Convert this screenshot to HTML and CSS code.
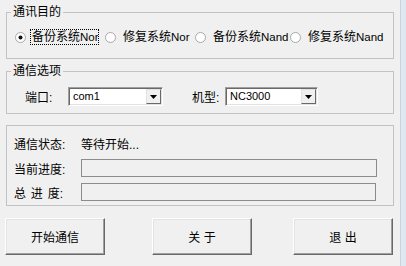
FILE: index.html
```html
<!DOCTYPE html>
<html lang="zh-CN">
<head>
<meta charset="utf-8">
<title>通讯</title>
<link rel="stylesheet" href="styles.css">
</head>
<body>
<div class="window">
  <div class="panel">
    <fieldset class="group g-target">
      <legend>通讯目的</legend>
      <div class="radios">
        <label class="radio r1">
          <svg class="rb" width="11" height="11" viewBox="0 0 11 11"><circle cx="5.5" cy="5.5" r="5" fill="#fff" stroke="#a8a8a8"/><circle cx="5.5" cy="5.5" r="2" fill="#111"/></svg>
          <span class="rtext focus">备份系统<span class="lat">Nor</span></span>
        </label>
        <label class="radio r2">
          <svg class="rb" width="11" height="11" viewBox="0 0 11 11"><circle cx="5.5" cy="5.5" r="5" fill="#fff" stroke="#a8a8a8"/></svg>
          <span class="rtext">修复系统<span class="lat">Nor</span></span>
        </label>
        <label class="radio r3">
          <svg class="rb" width="11" height="11" viewBox="0 0 11 11"><circle cx="5.5" cy="5.5" r="5" fill="#fff" stroke="#a8a8a8"/></svg>
          <span class="rtext">备份系统<span class="lat">Nand</span></span>
        </label>
        <label class="radio r4">
          <svg class="rb" width="11" height="11" viewBox="0 0 11 11"><circle cx="5.5" cy="5.5" r="5" fill="#fff" stroke="#a8a8a8"/></svg>
          <span class="rtext">修复系统<span class="lat">Nand</span></span>
        </label>
      </div>
    </fieldset>

    <fieldset class="group g-opts">
      <legend>通信选项</legend>
      <div class="opts">
        <span class="lbl lbl-port">端口:</span>
        <div class="combo combo-port">
          <span class="val">com1</span>
          <span class="arrow"><svg width="7" height="4" viewBox="0 0 7 4"><path d="M0 0H7L3.5 4Z" fill="#000"/></svg></span>
        </div>
        <span class="lbl lbl-model">机型:</span>
        <div class="combo combo-model">
          <span class="val">NC3000</span>
          <span class="arrow"><svg width="7" height="4" viewBox="0 0 7 4"><path d="M0 0H7L3.5 4Z" fill="#000"/></svg></span>
        </div>
      </div>
    </fieldset>

    <div class="group g-status">
      <div class="srow srow-text">
        <span class="slbl">通信状态:</span>
        <span class="sval">等待开始...</span>
      </div>
      <div class="srow">
        <span class="slbl">当前进度:</span>
        <div class="bar"></div>
      </div>
      <div class="srow srow-last">
        <span class="slbl spaced">总 进 度:</span>
        <div class="bar bar-total"></div>
      </div>
    </div>

    <div class="buttons">
      <button class="btn btn-start">开始通信</button>
      <button class="btn btn-about">关 于</button>
      <button class="btn btn-exit">退 出</button>
    </div>
  </div>
  <div class="frame"></div>
</div>
</body>
</html>
```
FILE: styles.css
```css
html, body {
  margin: 0;
  padding: 0;
  background: #f0f0f0;
}
body {
  font-family: "Liberation Sans", "Noto Sans CJK SC", sans-serif;
  font-size: 12px;
  color: #000;
  width: 406px;
  height: 266px;
  overflow: hidden;
}
.window {
  display: flex;
  width: 406px;
  height: 266px;
}
.panel {
  width: 400px;
  display: flex;
  flex-direction: column;
  padding-left: 6px;
  box-sizing: border-box;
}
.frame {
  width: 6px;
  background: #dfe8f1;
  border-left: 1px solid #c9d3dd;
  box-sizing: border-box;
}

.group {
  width: 388px;
  box-sizing: border-box;
  border: 1px solid #c3c3c3;
  margin: 0;
  padding: 0;
  min-width: 0;
}
.group legend {
  margin-left: 4px;
  padding: 0 2px;
  line-height: 16px;
  height: 16px;
}

.g-target {
  margin-top: 4px;
}
.radios {
  display: flex;
  align-items: center;
  height: 16px;
  padding: 9px 0 13px 8px;
}
.radio {
  display: flex;
  align-items: center;
  white-space: nowrap;
  overflow: hidden;
  height: 16px;
}
.r1 { width: 90px; }
.r2 { width: 90px; }
.r3 { width: 95px; }
.r4 { flex: 1; }
.rb {
  flex: none;
  margin-right: 4px;
}
.rtext {
  border: 1px solid transparent;
  line-height: 14px;
  height: 14px;
  padding: 0 0 0 1px;
  overflow: hidden;
}
.lat {
  font-size: 11.5px;
}
.r2 .rtext, .r3 .rtext, .r4 .rtext {
  margin-left: 1px;
}
.focus {
  border: 1px dotted #000;
  width: 66px;
}

.g-opts {
  margin-top: 4px;
}
.opts {
  display: flex;
  align-items: center;
  height: 19px;
  padding: 8px 0 7px 18px;
}
.lbl {
  white-space: nowrap;
}
.lbl-port { width: 43px; }
.lbl-model { width: 33px; margin-left: 29px; }
.combo {
  display: flex;
  align-items: stretch;
  height: 19px;
  box-sizing: border-box;
  background: #fff;
  border: 1px solid;
  border-color: #a0a0a0 #fff #fff #a0a0a0;
  box-shadow: inset 1px 1px 0 #696969, inset -1px -1px 0 #e3e3e3;
  padding: 1px;
}
.combo-port { width: 95px; }
.combo-model { width: 93px; }
.val {
  flex: 1;
  padding-left: 3px;
  line-height: 15px;
  font-size: 11px;
}
.arrow {
  width: 15px;
  box-sizing: border-box;
  background: #f0f0f0;
  border: 1px solid;
  border-color: #e3e3e3 #696969 #696969 #e3e3e3;
  display: flex;
  align-items: center;
  justify-content: center;
}

.g-status {
  margin-top: 11px;
  padding: 9px 16px 4px 7px;
  display: flex;
  flex-direction: column;
}
.srow {
  display: flex;
  align-items: center;
  height: 18px;
  margin-bottom: 6px;
}
.srow-text {
  height: 16px;
  margin-bottom: 8px;
}
.srow-last { margin-bottom: 0; }
.slbl {
  width: 67px;
  flex: none;
  white-space: nowrap;
}
.spaced { word-spacing: 1.5px; }
.bar {
  flex: 1;
  height: 18px;
  box-sizing: border-box;
  border: 1px solid #8c8c8c;
  background: #f0f0f0;
}
.bar-total { margin-right: 1px; }

.buttons {
  display: flex;
  margin-top: 12px;
  margin-left: -1px;
}
.btn {
  font-family: inherit;
  font-size: 12px;
  color: #000;
  width: 100px;
  height: 37px;
  padding: 0;
  background: #f0f0f0;
  border: 1px solid;
  border-color: #fff #696969 #696969 #fff;
  box-shadow: inset -1px -1px 0 #a0a0a0, inset 1px 1px 0 #e3e3e3;
  border-radius: 0;
}
.btn-about { margin-left: 47px; }
.btn-exit { margin-left: 41px; }
```
